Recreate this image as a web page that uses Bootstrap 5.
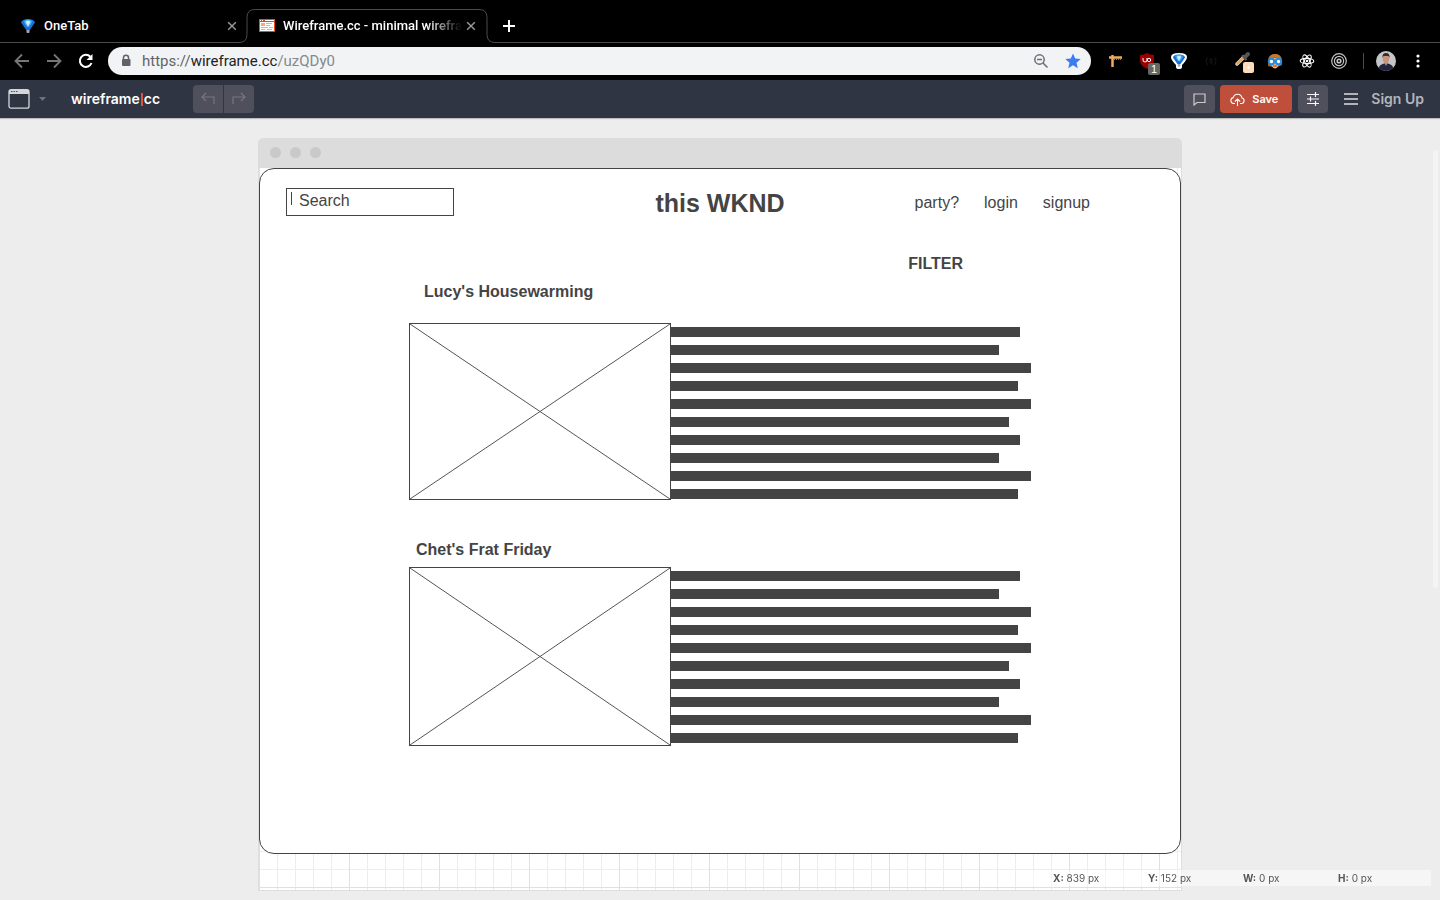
<!DOCTYPE html>
<html lang="en">
<head>
<meta charset="utf-8">
<meta name="viewport" content="width=device-width, initial-scale=1">
<title>Wireframe.cc - minimal wireframing</title>
<link href="https://cdn.jsdelivr.net/npm/bootstrap@5.3.0/dist/css/bootstrap.min.css" rel="stylesheet">
<style>
  body { background: #ededed; font-family: Roboto, sans-serif; font-size: 14px; line-height: 20px; }
  svg { display: block; flex: none; }
  .plain { border: 0; background: none; padding: 0; color: inherit; }

  /* Browser tabs */
  .tab-strip { background: #000; height: 43px; padding: 9px 0 0 8px; border-bottom: 1px solid #4b4b4b; color: #fff; font-size: 13px; font-weight: 500; }
  .tab-item { height: 34px; width: 239px; padding: 0 10px 0 12px; position: relative; }
  .tab-item.current { width: 240px; padding: 0 11px 0 12px; }
  .tab-shape { position: absolute; left: -8px; top: 0; }
  .tab-item > :not(.tab-shape) { position: relative; }
  .tab-name { white-space: nowrap; overflow: hidden; flex: 1 1 0; margin: 0 4px 0 8px; }
  .current .tab-name { -webkit-mask-image: linear-gradient(to left, transparent, #000 36px); mask-image: linear-gradient(to left, transparent, #000 36px); }

  /* Address bar */
  .address-row { background: #000; height: 37px; padding: 0 6px 2px; color: #fff; }
  .cell { width: 32px; height: 28px; display: flex; align-items: center; justify-content: center; position: relative; flex: none; }
  .address { background: #f1f3f4; height: 28px; border-radius: 14px; margin: 0 8px 0 6px; padding: 0 2px 0 12px; color: #5f6368; }
  .url { font-size: 15px; margin-left: 10px; }
  .url a { color: #85898d; text-decoration: none; }
  .url b { color: #222; font-weight: 400; }
  .url i { color: #5f6368; font-style: normal; }
  .count { position: absolute; right: 3px; bottom: 0; width: 12px; height: 12px; background: #666; border-radius: 2px; font: 11px/12px "Liberation Sans", sans-serif; text-align: center; }
  .divider { width: 1px; height: 16px; background: #4b4b4b; margin: 0 6px 0 8px; }

  /* Editor bar */
  .editor-bar { background: #2f3542; height: 38px; padding: 0 16px 0 8px; color: #fff; font-family: Inter, sans-serif; box-shadow: 0 1px 1px #0003; position: relative; }
  .logo-link { color: #fff; font: 600 14px/20px Inter, sans-serif; text-decoration: none; margin-left: 24px; width: 94px; white-space: nowrap; display: flex; align-items: center; }
  .logo-link span { background: #e0523a; width: 2px; height: 13px; margin: 0 1px; }
  .history { gap: 1px; margin-left: 28px; }
  .tool { height: 28px; width: 31px; background: #504f5c; border: 0; border-radius: 4px; padding: 0; display: flex; align-items: center; justify-content: center; color: #ccc; }
  .tool.dim { color: #77767f; width: 30px; }
  .save { width: 72px; height: 28px; background: #bf4e3a; border: 0; border-radius: 4px; color: #fff; font-size: 11px; font-weight: 600; padding: 0 4px 0 0; margin: 0 6px 0 5px; display: flex; align-items: center; justify-content: center; gap: 7px; }
  .lines { margin: 0 13px 0 16px; }
  .signup { color: #b4b5ba; font-size: 14px; font-weight: 600; text-decoration: none; }

  /* Canvas */
  .frame { max-width: 924px; margin: 20px auto 9px; }
  .frame-top { background: #dcdcdc; height: 30px; border-radius: 5px 5px 0 0; padding: 0 0 1px 12px; gap: 9px; }
  .dot { width: 11px; height: 11px; border-radius: 50%; background: #c9c9c9; }
  .paper { padding: 0 0 36px; border: solid #dedede; border-width: 0 1px 1px; background-color: #fff;
    background-image: linear-gradient(to right, transparent 89px, #e0e0e0 89px), linear-gradient(transparent 89px, #e0e0e0 89px), linear-gradient(to right, transparent 17px, #ededed 17px), linear-gradient(transparent 17px, #ededed 17px);
    background-size: 90px 90px, 90px 90px, 18px 18px, 18px 18px; background-position: 1px 0; }
  .sheet { background: #fff; border: 1px solid #444; border-radius: 15px; color: #444; font: 16px/20px "Liberation Sans", sans-serif; padding: 19px 0 107px; }
  .sheet-head { display: grid; grid-template-columns: 1fr auto 1fr; }
  .search { width: 168px; height: 28px; margin-left: 26px; position: relative; }
  .search::before { content: ""; position: absolute; left: 5px; top: 4px; width: 1px; height: 13px; background: #444; }
  .search input { width: 100%; height: 100%; border: 1px solid #444; padding: 0 12px 3px; color: #444; background: none; outline: 0; }
  .sheet h1 { font-size: 25px; line-height: 30px; font-weight: 700; margin: 0; }
  .sheet h2 { font-size: 16px; line-height: 20px; font-weight: 700; margin: 0; }
  .sheet nav { gap: 25px; margin-right: 90px; padding-top: 5px; }
  .sheet a { color: #444; text-decoration: none; }
  .filter { font-weight: 700; margin: 36px 217px 0 0; }
  .event { margin: 0 149px; }
  .event h2 { padding-left: 15px; margin: 8px 0 21px; }
  .event.second h2 { padding-left: 7px; margin: 40px 0 7px; }
  .picture { flex: 0 0 42.12%; height: 177px; border: 1px solid #444; }
  .second .picture { height: 179px; }
  .picture svg { width: 100%; height: 100%; }
  .bars { padding-top: 4px; gap: 8px; }
  .bars span { height: 10px; background: #444; width: 100%; }
  .bars .w-a { width: 97%; } .bars .w-b { width: 91%; } .bars .w-c { width: 96.5%; } .bars .w-d { width: 94%; }

  .status { position: fixed; right: 9px; bottom: 14px; width: 400px; height: 16px; padding-left: 22px; display: grid; grid-template-columns: repeat(3, 95px) 1fr; background: #ffffff80; color: #555; font: 10px/17px Inter, sans-serif; }
  .scroll-thumb { position: fixed; right: 2px; top: 150px; width: 5px; height: 438px; border-radius: 3px; background: #f4f4f4; }
</style>
</head>
<body>
<svg width="0" height="0" class="position-absolute" aria-hidden="true">
  <defs>
    <radialGradient id="blue" cx=".5" cy=".3" r=".7"><stop offset="0" stop-color="#e8f7ff"/><stop offset=".35" stop-color="#45b4f5"/><stop offset="1" stop-color="#0a48b8"/></radialGradient>
    <symbol id="funnel" viewBox="0 0 16 16"><path d="M1 4.500Q2 1 8 1t7 3.500L9.800 12H6.200Z" fill="#1672d8"/><path d="M3 3Q5 1.500 8 1.500T13 3L8 11Z" fill="url(#blue)"/><path d="M5.500 3h5L8 9.500Z" fill="#d9f2ff" opacity=".8"/><path d="M6.500 12h3v2.500q-1.500 1-3 0Z" fill="#94abc4"/></symbol>
    <symbol id="cross" viewBox="0 0 10 10"><path d="M1.200 1.200l7.600 7.600M8.800 1.200l-7.600 7.600" stroke="#9b9b9b" stroke-width="1.400"/></symbol>
  </defs>
</svg>

<header>
  <div class="tab-strip d-flex">
    <div class="tab-item d-flex align-items-center">
      <svg width="16" height="16"><use href="#funnel"/></svg>
      <span class="tab-name">OneTab</span>
      <button class="plain" aria-label="Close OneTab"><svg width="10" height="10"><use href="#cross"/></svg></button>
    </div>
    <div class="tab-item current d-flex align-items-center">
      <svg class="tab-shape" width="256" height="34"><path d="M0 33h256v1H0Z"/><path d="M0 33.500q8 0 8-8V8.500q0-8 8-8h224q8 0 8 8v17q0 8 8 8" fill="#000" stroke="#4b4b4b"/></svg>
      <svg width="16" height="16"><path d="M0 1h16v13H0Z" fill="#f4470f"/><path d="M1 4h14v9H1Z" fill="#fff"/><path d="M1 2h1v1H1Zm2 0h1v1H3Zm3 0h9v1H6Z" fill="#fff"/><path d="M2 5h4v3H2Zm5 0h6v1H7Zm0 2h4v1H7ZM2 9h7v1H2Zm8 0h4v1h-4ZM2 11h4v1H2Zm6 0h5v1H8Z" fill="#faa77e"/></svg>
      <span class="tab-name">Wireframe.cc - minimal wirefra</span>
      <button class="plain" aria-label="Close Wireframe.cc"><svg width="10" height="10"><use href="#cross"/></svg></button>
    </div>
    <button class="plain ms-3" aria-label="New tab"><svg width="12" height="12"><path d="M6 0v12M0 6h12" stroke="#fff" stroke-width="2"/></svg></button>
  </div>

  <div class="address-row d-flex align-items-center">
    <button class="plain cell" aria-label="Back"><svg width="16" height="16" fill="none" stroke="#777" stroke-width="1.800"><path d="M15 8H2M8 1.500L1.500 8 8 14.500"/></svg></button>
    <button class="plain cell" aria-label="Forward"><svg width="16" height="16" fill="none" stroke="#777" stroke-width="1.800"><path d="M1 8h13M8 1.500L14.500 8 8 14.500"/></svg></button>
    <button class="plain cell" aria-label="Reload"><svg width="16" height="16"><path d="M13.500 10A6 6 0 1 1 12.300 3.800" fill="none" stroke="#fff" stroke-width="2"/><path d="M14.500 1v6h-6Z" fill="#fff"/></svg></button>
    <div class="address d-flex align-items-center flex-grow-1">
      <svg width="12" height="14"><path d="M3.500 6V3.800a2.500 2.500 0 0 1 5 0V6" fill="none" stroke="#5f6368" stroke-width="1.500"/><rect x="2" y="5" width="8.500" height="7" rx="1" fill="#5f6368"/></svg>
      <div class="url flex-grow-1"><a href="#"><i>https://</i><b>wireframe.cc</b>/uzQDy0</a></div>
      <button class="plain cell" aria-label="Zoom"><svg width="16" height="16" fill="none" stroke="#6b6f73" stroke-width="1.500"><circle cx="6.500" cy="6.500" r="4.700"/><path d="M4 6.500h5M10 10l4.500 4.500"/></svg></button>
      <button class="plain cell" aria-label="Bookmark"><svg width="16" height="16"><path d="M8 .5l2.200 5.100 5.500.5-4.200 3.600 1.300 5.500L8 12.300l-4.800 2.900 1.300-5.500L.3 6.100l5.500-.5Z" fill="#3b7cf5"/></svg></button>
    </div>
    <button class="plain cell" aria-label="Ruler"><svg width="16" height="16" fill="none" stroke="#f2aa62"><path d="M2 4.500h13" stroke-width="2.500"/><path d="M5.500 2v12" stroke-width="2.500"/><path d="M7 6.500h8" stroke="#b87333" stroke-dasharray="1 1"/></svg></button>
    <button class="plain cell" aria-label="Blocker"><svg width="16" height="16"><path d="M8 0q3 2 7 2v5q0 6-7 9-7-3-7-9V2q4 0 7-2Z" fill="#900"/><path d="M4 5v2q0 2 2 2t2-2V5" fill="none" stroke="#fff"/><circle cx="10" cy="7" r="1.700" fill="none" stroke="#fff"/></svg><span class="count">1</span></button>
    <button class="plain cell" aria-label="OneTab"><svg width="18" height="18" viewBox="0 0 18 18"><path d="M1 5q0-4 8-4t8 4q0 3-5 8v2q0 2-3 2t-3-2v-2Q1 8 1 5Z" fill="#fff"/><use href="#funnel" x="2" y="1" width="14" height="15"/></svg></button>
    <button class="plain cell" aria-label="Extension"><svg width="14" height="14" fill="none" stroke="#171717"><path d="M4 3Q0 7 4 11M10 3q4 4 0 8M6 5v4h2V5Z"/></svg></button>
    <button class="plain cell" aria-label="Color picker"><svg width="22" height="24"><path d="M5 15l7-7" stroke="#ddd" stroke-width="3.500" stroke-linecap="round"/><path d="M5.500 14.500l5-5" stroke="#e5a250" stroke-width="2.500" stroke-linecap="round"/><path d="M10 6.500l4.500 4.500" stroke="#666" stroke-width="2"/><path d="M13 8l3-3" stroke="#555" stroke-width="4" stroke-linecap="round"/><rect x="11" y="13" width="11" height="11" rx="2" fill="#ffdbba"/><path d="M16.500 17v3M15 18.500h3" stroke="#fff"/></svg></button>
    <button class="plain cell" aria-label="Disguise"><svg width="16" height="16"><path d="M1 8q0-7 7-7t7 7v4q-3 2-7 2t-7-1Z" fill="#a9601c"/><path d="M4 5h8v7q-4 7-8 0Z" fill="#f4b27a"/><path d="M2 6q1-5 6-5t6 5q-4 0-6-2-2 2-6 2Z" fill="#c27a2e"/><g fill="#fff" stroke="#258be0" stroke-width="2"><circle cx="4.500" cy="8.500" r="2.700"/><circle cx="11.500" cy="8.500" r="2.700"/></g><path d="M6 13h4" stroke="#9b4d1c"/></svg></button>
    <button class="plain cell" aria-label="React tools"><svg width="16" height="16" fill="none" stroke="#fff" stroke-width="1.100"><g transform="translate(8 8)"><ellipse rx="6.800" ry="2.600"/><ellipse rx="6.800" ry="2.600" transform="rotate(60)"/><ellipse rx="6.800" ry="2.600" transform="rotate(120)"/><circle r="1.300" fill="#fff" stroke="none"/></g></svg></button>
    <button class="plain cell" aria-label="Target"><svg width="16" height="16" fill="none" stroke="#c5c5c5" stroke-width="1.200"><circle cx="8" cy="8" r="7.300"/><circle cx="8" cy="8" r="4.600"/><circle cx="8" cy="8" r="1.800" stroke-width="1.600"/></svg></button>
    <span class="divider"></span>
    <button class="plain cell" aria-label="Profile"><svg width="20" height="20"><clipPath id="round"><circle cx="10" cy="10" r="10"/></clipPath><g clip-path="url(#round)"><path d="M0 0h20v20H0Z" fill="#c4c6c9"/><path d="M2 20q0-7 8-8 8 1 8 8Z" fill="#20243c"/><path d="M8 11h4l-2 4Z" fill="#c28f7a"/><ellipse cx="10" cy="7.500" rx="3.300" ry="4.500" fill="#c8957c"/><path d="M6.500 7Q6 2 10 2t3.500 5L12.500 5h-5Z" fill="#3b2b25"/></g></svg></button>
    <button class="plain cell" aria-label="Menu"><svg width="4" height="14" fill="#fff"><circle cx="2" cy="2" r="1.600"/><circle cx="2" cy="7" r="1.600"/><circle cx="2" cy="12" r="1.600"/></svg></button>
  </div>

  <div class="editor-bar d-flex align-items-center">
    <button class="plain d-flex align-items-center" aria-label="Canvas type">
      <svg width="22" height="20"><rect x="1" y=".7" width="20" height="18.500" rx="2" fill="none" stroke="#d5d6d9" stroke-width="1.300"/><path d="M1 1h20v4H1Z" fill="#d5d6d9"/><path d="M3 2.500h7" stroke="#555" stroke-dasharray="1.500 1"/></svg>
      <svg class="ms-2" width="9" height="6"><path d="M1 1h7L4.500 5Z" fill="#6f717b"/></svg>
    </button>
    <a class="logo-link" href="#">wireframe<span></span>cc</a>
    <div class="history d-flex">
      <button class="tool dim rounded-end-0" aria-label="Undo"><svg width="14" height="14" fill="none" stroke="currentColor" stroke-width="1.200"><path d="M5 1L1 5l4 4M1 5h12v7"/></svg></button>
      <button class="tool dim rounded-start-0" aria-label="Redo"><svg width="14" height="14" fill="none" stroke="currentColor" stroke-width="1.200"><path d="M9 1l4 4-4 4M13 5H1v7"/></svg></button>
    </div>
    <div class="d-flex align-items-center ms-auto">
      <button class="tool" aria-label="Comments"><svg width="13" height="13" fill="none" stroke="currentColor" stroke-width="1.200"><path d="M1 1h11v8.500H4L1 12Z"/></svg></button>
      <button class="save"><svg width="15" height="13" fill="none" stroke="#fff" stroke-width="1.100"><path d="M5 10.500H3.500a3 3 0 0 1-.3-5.900A4.500 4.500 0 0 1 12 5a2.800 2.800 0 0 1-.5 5.500H10M7.500 13V6M4.800 8.500L7.500 6l2.700 2.500"/></svg>Save</button>
      <button class="tool dim text-light" aria-label="Settings"><svg width="14" height="14" stroke="currentColor" stroke-width="1.200"><path d="M1 2.500h12M1 7h12M1 11.500h12M9.500 0v5M4.500 4.500v5M9.500 9v5"/></svg></button>
      <button class="plain lines" aria-label="Main menu"><svg width="14" height="12" stroke="#ddd" stroke-width="1.300"><path d="M0 1h14M0 6h14M0 11h14"/></svg></button>
      <a class="signup" href="#">Sign Up</a>
    </div>
  </div>
</header>

<main>
  <div class="frame">
    <div class="frame-top d-flex align-items-center"><span class="dot"></span><span class="dot"></span><span class="dot"></span></div>
    <div class="paper">
      <div class="sheet">
        <div class="sheet-head">
          <div class="search"><input type="text" value="Search" aria-label="Search"></div>
          <h1>this WKND</h1>
          <nav class="d-flex justify-content-end"><a href="#">party?</a><a href="#">login</a><a href="#">signup</a></nav>
        </div>
        <div class="filter text-end">FILTER</div>
        <section class="event">
          <h2>Lucy's Housewarming</h2>
          <div class="d-flex">
            <div class="picture"><svg viewBox="0 0 260 175" preserveAspectRatio="none" stroke="#555"><path d="M0 0l260 175M260 0L0 175" vector-effect="non-scaling-stroke"/></svg></div>
            <div class="bars d-flex flex-column flex-grow-1"><span class="w-a"></span><span class="w-b"></span><span></span><span class="w-c"></span><span></span><span class="w-d"></span><span class="w-a"></span><span class="w-b"></span><span></span><span class="w-c"></span></div>
          </div>
        </section>
        <section class="event second">
          <h2>Chet's Frat Friday</h2>
          <div class="d-flex">
            <div class="picture"><svg viewBox="0 0 260 175" preserveAspectRatio="none" stroke="#555"><path d="M0 0l260 175M260 0L0 175" vector-effect="non-scaling-stroke"/></svg></div>
            <div class="bars d-flex flex-column flex-grow-1"><span class="w-a"></span><span class="w-b"></span><span></span><span class="w-c"></span><span></span><span class="w-d"></span><span class="w-a"></span><span class="w-b"></span><span></span><span class="w-c"></span></div>
          </div>
        </section>
      </div>
    </div>
  </div>
</main>

<div class="scroll-thumb"></div>
<footer class="status"><span><b>X:</b> 839 px</span><span><b>Y:</b> 152 px</span><span><b>W:</b> 0 px</span><span><b>H:</b> 0 px</span></footer>
<script src="https://cdn.jsdelivr.net/npm/bootstrap@5.3.0/dist/js/bootstrap.bundle.min.js"></script>
</body>
</html>
